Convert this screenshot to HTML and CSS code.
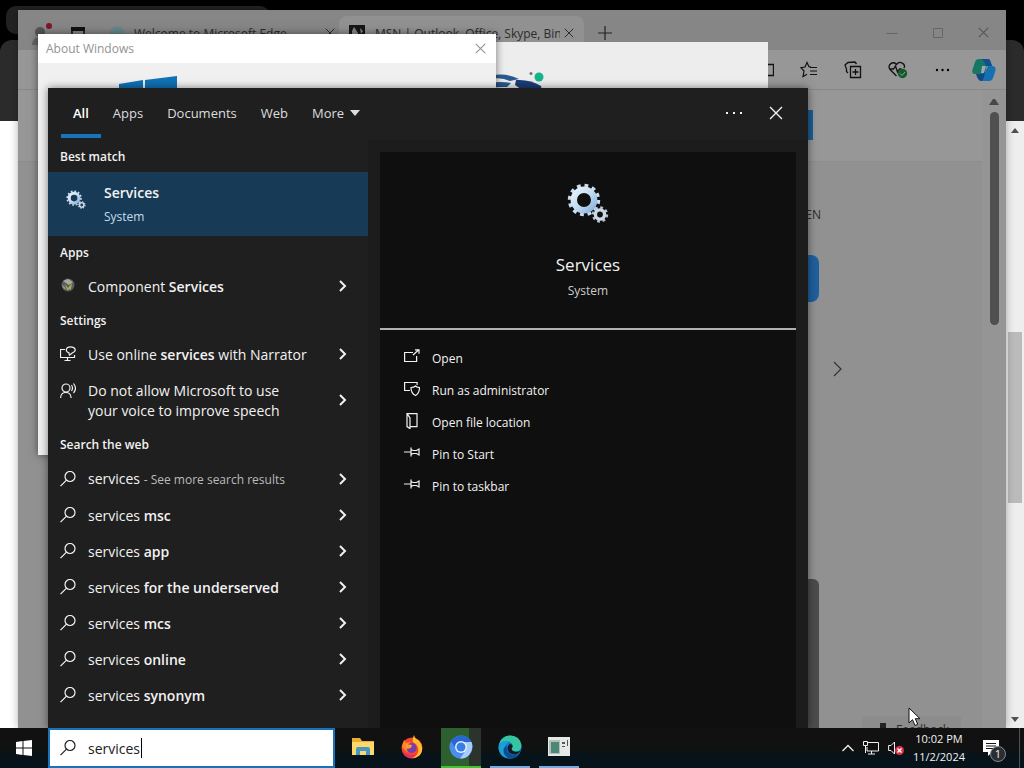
FILE: index.html
```html
<!DOCTYPE html>
<html lang="en">
<head>
    <meta charset="UTF-8">
    <meta name="viewport" content="width=device-width, initial-scale=1.0">
    <title>Desktop</title>
    <link rel="stylesheet" href="styles.css">
</head>
<body>
    <!-- shared icons -->
    <svg class="sprite" aria-hidden="true">
        <defs>
            <linearGradient id="steel" x1="0" y1="0" x2="1" y2="1">
                <stop offset="0" stop-color="#e8f0fa"/>
                <stop offset="0.5" stop-color="#c3dcf2"/>
                <stop offset="1" stop-color="#8bb2dc"/>
            </linearGradient>
        </defs>
        <symbol id="i-chevron" viewBox="0 0 10 14"><path d="M2 2l5 5-5 5" fill="none" stroke="currentColor" stroke-width="2"/></symbol>
        <symbol id="i-search" viewBox="0 0 16 16"><circle cx="10" cy="5.5" r="5" fill="none" stroke="currentColor" stroke-width="1.2"/><path d="M6.5 9.2L.5 15.2" stroke="currentColor" stroke-width="1.2"/></symbol>
        <symbol id="i-close" viewBox="0 0 14 14"><path d="M1 1l12 12M13 1L1 13" fill="none" stroke="currentColor" stroke-width="1.4"/></symbol>
        <symbol id="i-gears" viewBox="0 0 42 42">
            <circle cx="17" cy="17" r="14.5" fill="none" stroke="#c9def2" stroke-width="3.4" stroke-dasharray="3.8 3.8"/>
            <circle cx="17" cy="17" r="10.2" fill="none" stroke="url(#steel)" stroke-width="6.4"/>
            <circle cx="33" cy="31.5" r="7" fill="none" stroke="#b4c3d3" stroke-width="2.4" stroke-dasharray="2.75 2.75"/>
            <circle cx="33" cy="31.5" r="4.6" fill="none" stroke="#cbd8e6" stroke-width="3.4"/>
        </symbol>
        <symbol id="i-pin" viewBox="0 0 16 16"><path d="M0 7h7M7 2.5v9M7 4.5l2 1h3.5l2.5-1.5v6l-2.5-1.5H9l-2 1" fill="none" stroke="currentColor" stroke-width="1.2"/></symbol>
    </svg>

    <div class="desktop">
        <main class="workspace">
            <div class="page-back">
                <div class="page-tabs"></div>
                <div class="page-bar"></div>
                <div class="page-body">
                    <div class="scroll-track">
                        <svg width="8" height="5" viewBox="0 0 8 5"><path d="M0 5l4-5 4 5z" fill="#505050"/></svg>
                        <div class="scroll-thumb"></div>
                        <svg width="8" height="5" viewBox="0 0 8 5"><path d="M0 0l4 5 4-5z" fill="#505050"/></svg>
                    </div>
                </div>
            </div>

            <section class="window browser">
                <div class="browser-tabs">
                    <svg class="profile" width="24" height="24" viewBox="0 0 24 24"><circle cx="9" cy="11" r="5" fill="#555"/><path d="M1 24c0-11 16-11 16 0z" fill="#666"/><circle cx="18" cy="5" r="3" fill="#821425"/></svg>
                    <svg class="workspaces" width="14" height="14" viewBox="0 0 14 14"><path d="M1 4h12v9H1z" fill="none" stroke="#111" stroke-width="1.5"/><path d="M0 1h14v4H0z" fill="#111"/></svg>
                    <div class="browser-tab">
                        <svg class="tab-icon" width="14" height="14"><circle cx="7" cy="7" r="7" fill="#66888a"/></svg>
                        <span>Welcome to Microsoft Edge</span>
                        <svg width="10" height="10"><use href="#i-close"/></svg>
                    </div>
                    <div class="browser-tab active">
                        <svg class="tab-icon" width="16" height="16" viewBox="0 0 16 16"><path d="M0 0h16v16H0z" fill="#151515"/><path d="M5 2l4 6v8H3V6zM11 3l3 3-2 3z" fill="#888"/></svg>
                        <span>MSN | Outlook, Office, Skype, Bin</span>
                        <svg width="10" height="10"><use href="#i-close"/></svg>
                    </div>
                    <svg class="new-tab" width="14" height="14" viewBox="0 0 14 14"><path d="M7 0v14M0 7h14" stroke="#222" stroke-width="1.2"/></svg>
                    <div class="window-controls">
                        <svg width="12" height="12" viewBox="0 0 12 12"><path d="M0 6.5h12" stroke="#666"/></svg>
                        <svg width="12" height="12" viewBox="0 0 12 12"><path d="M1.5 1.5h9v9h-9z" fill="none" stroke="#666"/></svg>
                        <svg width="11" height="11"><use href="#i-close"/></svg>
                    </div>
                </div>
                <div class="browser-tools">
                    <svg width="18" height="18" viewBox="0 0 18 18"><path d="M2.5 3.5h15v11h-15zM8.5 3.5v11" fill="none" stroke="#111" stroke-width="1.3"/></svg>
                    <svg width="18" height="18" viewBox="0 0 18 18"><path d="M11 6l-2-.3L7 1.5 5 6l-4 .7L4 10l-1 5.5 4-2.3M10 6.500h7M10 10h7M10 13.500h7" fill="none" stroke="#111" stroke-width="1.2"/></svg>
                    <svg width="18" height="18" viewBox="0 0 18 18"><path d="M6.5 5.5h10v11h-10zM11.5 8v6M8.5 11h6M4 12l-1.500-1.500V8L1 4l3-2.500 7-.5 1.500 2" fill="none" stroke="#111" stroke-width="1.3"/></svg>
                    <svg width="20" height="18" viewBox="0 0 20 18"><path d="M8.5 15L2 8.5C-1 4 5-1 8.5 3.5 12-1 18 3 16 7M2 8h3.500L7.500 5l2 6 2-3h2" fill="none" stroke="#111" stroke-width="1.3"/><circle cx="14.5" cy="12.5" r="4.700" fill="#125c2b"/><path d="M12 12.500l2 2 3-3.500" fill="none" stroke="#9a9a9a"/></svg>
                    <svg width="18" height="18" viewBox="0 0 18 18"><circle cx="3" cy="9" r="1.2"/><circle cx="8.5" cy="9" r="1.2"/><circle cx="14" cy="9" r="1.2"/></svg>
                    <svg class="copilot" width="24" height="24" viewBox="0 0 24 24"><path d="M7 1h9q2 0 3 4l1 3h-5l-1 2-2 6H2q-3-1-1-6l2-6q1-3 4-3z" fill="#167765"/><path d="M9 1h7q2 0 3 4l1 3h-6q-2-6-5-7z" fill="#114f91"/><path d="M16 8h5q4 1 2 6l-2 6q-1 3-4 3H9q-2 0-4-7h6q2 0 3-4z" fill="#1471b0"/><path d="M4 16h7l3-6-2 9q-1 4-3 4-3 0-5-7z" fill="#124883"/><path d="M10 8h4l-2 7H9z" fill="#9caab0"/></svg>
                </div>
                <div class="browser-page">
                    <div class="news">
                        <div class="news-head"><div class="search-go"></div></div>
                        <div class="news-column">
                            <span class="news-link">OPEN</span>
                            <div class="news-button"></div>
                            <div class="news-card"></div>
                            <svg class="next" width="9" height="16" viewBox="0 0 9 16"><path d="M1 1l7 7-7 7" fill="none" stroke="#333" stroke-width="1.2"/></svg>
                        </div>
                        <div class="feedback">
                            <svg width="12" height="12" viewBox="0 0 12 12"><path d="M0 5h6v7H0zM6 0h6v5H6z" fill="#222"/></svg>
                            <span>Feedback</span>
                        </div>
                    </div>
                    <div class="news-scroll">
                        <svg width="10" height="6" viewBox="0 0 10 6"><path d="M0 6l4-6h2l4 6z" fill="#484848"/></svg>
                        <div class="news-thumb"></div>
                    </div>
                </div>
            </section>

            <section class="window splash">
                <svg width="60" height="20" viewBox="0 0 60 20"><path d="M0 4q14-4 28 3l-9 2q-9-4-19-2zM0 11q9-2 20 0l-4 4H0z" fill="#2a5b8f"/><path d="M25 8q14-1 25 6l1 6H34l-10-7z" fill="#1b3d79"/><path d="M0 17l16-1 10 4H0z" fill="#1b3d79"/><circle cx="48" cy="5" r="4.500" fill="#15b389"/><circle cx="40" cy="1.500" r="1.500" fill="#756b84"/></svg>
            </section>

            <section class="window about">
                <div class="about-title">
                    <span>About Windows</span>
                    <svg width="11" height="11"><use href="#i-close"/></svg>
                </div>
                <div class="about-body">
                    <svg width="60" height="52" viewBox="0 0 60 52"><path d="M1 8l24-4v22H1zM27 4l32-4v26H27zM1 28h24v20L1 45zM27 28h32v24l-32-4z" fill="#0f72b5"/></svg>
                </div>
            </section>

            <section class="search-panel">
                <header class="search-head">
                    <nav class="tabs">
                        <button class="tab selected">All</button>
                        <button class="tab">Apps</button>
                        <button class="tab">Documents</button>
                        <button class="tab">Web</button>
                        <button class="tab">More <svg width="10" height="6" viewBox="0 0 10 6"><path d="M0 0h10L5 6z" fill="currentColor"/></svg></button>
                    </nav>
                    <div class="head-actions">
                        <button class="icon-button" aria-label="Options"><svg width="16" height="4" viewBox="0 0 16 4"><path d="M0 1h2v2H0zM7 1h2v2H7zM14 1h2v2h-2z" fill="currentColor"/></svg></button>
                        <button class="icon-button" aria-label="Close"><svg width="14" height="14"><use href="#i-close"/></svg></button>
                    </div>
                </header>
                <div class="search-body">
                    <div class="results">
                        <h2>Best match</h2>
                        <button class="best-match">
                            <svg width="20" height="20"><use href="#i-gears"/></svg>
                            <span class="best-text"><strong>Services</strong><small>System</small></span>
                        </button>
                        <h2>Apps</h2>
                        <button class="result">
                            <svg width="16" height="16" viewBox="0 0 16 16"><circle cx="8" cy="7" r="6.5" fill="#59605c"/><path d="M3 3l5-2 5 3-4 3z" fill="#a5aaa2"/><path d="M5 6l3 4 4-5-1 6-4 1z" fill="#b6a94b"/><path d="M2 7l3 2 1 3-3-2z" fill="#849d91"/></svg>
                            <span>Component <b>Services</b></span>
                            <svg width="10" height="14"><use href="#i-chevron"/></svg>
                        </button>
                        <h2>Settings</h2>
                        <button class="result">
                            <svg width="16" height="16" viewBox="0 0 16 16"><path d="M5 3.500H.500v8h14V9M7.500 11.500v3M4.500 14.500h6M9 8.500V6.800C5 5.500 5.500.800 10.500.800s6.500 4.500 2 6L9 9.500" fill="none" stroke="currentColor" stroke-width="1.2"/></svg>
                            <span>Use online <b>services</b> with Narrator</span>
                            <svg width="10" height="14"><use href="#i-chevron"/></svg>
                        </button>
                        <button class="result two-lines">
                            <svg width="16" height="16" viewBox="0 0 16 16"><circle cx="6" cy="5" r="4" fill="none" stroke="currentColor" stroke-width="1.2"/><path d="M.600 15c0-7.500 10.500-7.500 10.500 0M11.500 2q2 3 0 6M13.500.500q4 5 0 9.500" fill="none" stroke="currentColor" stroke-width="1.2"/></svg>
                            <span>Do not allow Microsoft to use your voice to improve speech</span>
                            <svg width="10" height="14"><use href="#i-chevron"/></svg>
                        </button>
                        <h2>Search the web</h2>
                        <button class="result more-results"><svg width="16" height="16"><use href="#i-search"/></svg><span>services <small>- See more search results</small></span><svg width="10" height="14"><use href="#i-chevron"/></svg></button>
                        <button class="result"><svg width="16" height="16"><use href="#i-search"/></svg><span>services <b>msc</b></span><svg width="10" height="14"><use href="#i-chevron"/></svg></button>
                        <button class="result"><svg width="16" height="16"><use href="#i-search"/></svg><span>services <b>app</b></span><svg width="10" height="14"><use href="#i-chevron"/></svg></button>
                        <button class="result"><svg width="16" height="16"><use href="#i-search"/></svg><span>services <b>for the underserved</b></span><svg width="10" height="14"><use href="#i-chevron"/></svg></button>
                        <button class="result"><svg width="16" height="16"><use href="#i-search"/></svg><span>services <b>mcs</b></span><svg width="10" height="14"><use href="#i-chevron"/></svg></button>
                        <button class="result"><svg width="16" height="16"><use href="#i-search"/></svg><span>services <b>online</b></span><svg width="10" height="14"><use href="#i-chevron"/></svg></button>
                        <button class="result"><svg width="16" height="16"><use href="#i-search"/></svg><span>services <b>synonym</b></span><svg width="10" height="14"><use href="#i-chevron"/></svg></button>
                    </div>
                    <div class="preview">
                        <div class="preview-head">
                            <svg width="42" height="42"><use href="#i-gears"/></svg>
                            <h1>Services</h1>
                            <p>System</p>
                        </div>
                        <div class="actions">
                            <button class="action"><svg width="16" height="16" viewBox="0 0 16 16"><path d="M9 3.500H.600v9h12V7M9 6l5.500-5M11 .800h4v4" fill="none" stroke="currentColor" stroke-width="1.2"/></svg>Open</button>
                            <button class="action"><svg width="16" height="16" viewBox="0 0 16 16"><path d="M6 9.500H.600v-8h12.500V4M7 6.500q3 0 4.500-1.500Q13 6.500 15.500 6.500c0 4-1 6.500-4 8-3.500-1.500-4.500-4-4.500-8z" fill="none" stroke="currentColor" stroke-width="1.2"/></svg>Run as administrator</button>
                            <button class="action"><svg width="16" height="16" viewBox="0 0 16 16"><path d="M3 .600h10v13H6M3 .600v13l3 2V5z" fill="none" stroke="currentColor" stroke-width="1.2"/></svg>Open file location</button>
                            <button class="action"><svg width="16" height="16"><use href="#i-pin"/></svg>Pin to Start</button>
                            <button class="action"><svg width="16" height="16"><use href="#i-pin"/></svg>Pin to taskbar</button>
                        </div>
                    </div>
                </div>
            </section>
        </main>

        <footer class="taskbar">
            <button class="start" aria-label="Start"><svg width="16" height="16" viewBox="0 0 16 16"><path d="M0 2l6.500-1v6.500H0zM7.500.900L16 0v7.500H7.500zM0 8.500h6.500V15L0 14zM7.500 8.500H16V16l-8.500-1z" fill="#fff"/></svg></button>
            <label class="search-box">
                <svg width="16" height="16"><use href="#i-search"/></svg>
                <input type="text" value="services" aria-label="Search">
                <span class="caret"></span>
            </label>
            <div class="apps">
                <button class="app" aria-label="File Explorer"><svg width="22" height="20" viewBox="0 0 22 20"><path d="M0 1h8l2 3h12v14H0z" fill="#e9ad36"/><path d="M0 5h22v13H0z" fill="#fbd867"/><path d="M4 18v-6q0-2 2-2h10q2 0 2 2v6h-4v-4H8v4z" fill="#4496c4"/></svg></button>
                <button class="app" aria-label="Firefox"><svg width="24" height="24" viewBox="0 0 24 24"><circle cx="12" cy="13" r="10.5" fill="#f6462c"/><path d="M14 0q1 4 4 5 5 5 4 11-2 7-10 7 8-4 6-10-1-4-5-6-1-3 1-7z" fill="#ffbd2c"/><path d="M2 12L4 5l2 3 5-1-3 4 4 2-5 4z" fill="#ff8927"/><circle cx="11.5" cy="13" r="5" fill="#7340ae"/><path d="M6 9l6 1-1 3-5 1z" fill="#ff9b2e"/><path d="M2 16q7 6 15 3-4 5-9 3.500Q4 21 2 16z" fill="#e52b67"/></svg></button>
                <button class="app current" aria-label="Chromium"><svg width="24" height="24" viewBox="0 0 24 24"><circle cx="12" cy="12" r="11.5" fill="#4b8cf0"/><path d="M12 7h10.500Q25 14 20 20q-4 4-9 3.500L17 15z" fill="#a8cdfb"/><path d="M2 6q4-6 12-5.500Q20 2 22.500 7H12L7 14z" fill="#2867d0"/><circle cx="12" cy="12" r="6" fill="#e7f1ff"/><circle cx="12" cy="12" r="4.5" fill="#397de6"/></svg></button>
                <button class="app open" aria-label="Microsoft Edge"><svg width="24" height="24" viewBox="0 0 24 24"><circle cx="12" cy="12" r="11.5" fill="#1378c5"/><path d="M1 10Q3 1 12 .500q10 0 11.500 10 0 6-7 6-5-1-2-4 1-5-5-6Q3 6 1 10z" fill="#35c6a0"/><path d="M1 10q4-6 11-3-6 2-5 9 1 6 7 7Q3 25 .500 14z" fill="#1b9fd6"/><path d="M9 10q-2 9 8 10 3 0 5-2-5 7-12 5-6-4-4-10z" fill="#0c4f91"/><path d="M12 9q3 0 2.500 3-2.500 3 2 4.500 4 1 6-1-2 4-6 4-7-1-7-6 0-3 2.500-4.500z" fill="#101b24"/></svg></button>
                <button class="app open" aria-label="Installer"><svg width="22" height="20" viewBox="0 0 22 20"><path d="M0 0h22v19H0z" fill="#e6e8e6"/><path d="M1 3h11v14H1z" fill="#b3c0ba"/><path d="M3 5h8v11H3z" fill="#4b8877"/><path d="M14 5h3v2h-3zM14 9h3v1h-3zM19 3h1v6h-1z" fill="#555"/></svg></button>
            </div>
            <div class="tray">
                <svg width="12" height="8" viewBox="0 0 12 8"><path d="M.5 7L6 1.500 11.500 7" fill="none" stroke="#eee" stroke-width="1.3"/></svg>
                <svg width="16" height="14" viewBox="0 0 16 14"><path d="M5 1.500h10.500v8.500H4V6M8.500 10v3M5 13h7M.500.500h4v4h-4zM2.500 4.500V12" fill="none" stroke="#eee"/></svg>
                <svg width="16" height="14" viewBox="0 0 16 14"><path d="M.600 4.500H3L6.500 1v12L3 9.500H.600z" fill="none" stroke="#eee"/><circle cx="11.5" cy="9.5" r="4.5" fill="#d83445"/><path d="M9.500 7.500l4 4M13.500 7.500l-4 4" stroke="#fff" stroke-width="1.4"/></svg>
                <div class="clock"><span>10:02 PM</span><span>11/2/2024</span></div>
                <div class="notifications">
                    <svg width="18" height="16" viewBox="0 0 18 16"><path d="M1 0h16v12h-7l-4 4v-4H1z" fill="#fff"/><path d="M4 3.500h10M4 6h10M4 8.500h7" stroke="#151515"/></svg>
                    <span class="badge">1</span>
                </div>
            </div>
            <div class="show-desktop"></div>
        </footer>
    </div>

    <svg class="cursor" width="14" height="20" viewBox="0 0 14 20"><path d="M1 1v15l3.500-3.300L7 18.500l2.700-1.200L7.300 11.700h4.700z" fill="#fff" stroke="#111"/></svg>
</body>
</html>
```
FILE: styles.css
```css
* {
    box-sizing: border-box;
}

body {
    margin: 0;
    font-family: "Open Sans", "Noto Sans", sans-serif;
    font-size: 14px;
    color: #f2f2f2;
    background: #000;
}

button {
    padding: 0;
    border: none;
    background: none;
    color: inherit;
    font: inherit;
    text-align: left;
}

svg {
    display: block;
    flex-shrink: 0;
}

h1, h2, p {
    margin: 0;
}

.sprite {
    position: absolute;
    width: 0;
    height: 0;
}

.desktop {
    display: flex;
    flex-direction: column;
    height: 100vh;
    overflow: hidden;
}

.workspace {
    flex: 1;
    position: relative;
    overflow: hidden;
}

/* page behind the windows */
.page-back {
    display: flex;
    flex-direction: column;
    height: 100%;
}

.page-tabs {
    width: 264px;
    height: 28px;
    margin: 6px;
    background: #222;
    border-radius: 10px;
}

.page-bar {
    height: 81px;
    background: #2b2b2b;
    border-radius: 12px 12px 0 0;
}

.page-body {
    flex: 1;
    display: flex;
    justify-content: flex-end;
    background: #fff;
}

.scroll-track {
    display: flex;
    flex-direction: column;
    align-items: center;
    justify-content: space-between;
    width: 18px;
    padding: 7px 0 6px;
    background: #eee;
}

.scroll-thumb {
    width: 14px;
    height: 171px;
    margin-bottom: 15px;
    background: #bbb;
}

.window {
    position: absolute;
    overflow: hidden;
}

/* browser window */
.browser {
    top: 10px;
    left: 18px;
    right: 18px;
    bottom: 0;
    display: flex;
    flex-direction: column;
    background: #919191;
    box-shadow: 0 0 8px rgba(0, 0, 0, 0.3);
    color: #2c2c2c;
    font-size: 12px;
}

.browser-tabs {
    display: flex;
    align-items: center;
    height: 40px;
    padding: 6px 17px 0 13px;
    background: #868686;
    white-space: nowrap;
}

.workspaces {
    margin-left: 16px;
}

.browser-tab {
    display: flex;
    align-items: center;
    gap: 4px;
    width: 245px;
    height: 34px;
    padding: 0 10px;
    margin-left: 15px;
}

.browser-tab span {
    flex: 1;
    overflow: hidden;
}

.tab-icon {
    margin-right: 6px;
}

.browser-tab.active {
    margin-left: -6px;
    background: #919191;
    border-radius: 8px 8px 0 0;
}

.new-tab {
    margin-left: 14px;
}

.window-controls {
    display: flex;
    gap: 34px;
    margin-left: auto;
    color: #555;
}

.browser-tools {
    display: flex;
    align-items: center;
    justify-content: flex-end;
    gap: 26px;
    height: 40px;
    padding-right: 10px;
    background: #979797;
    border-bottom: 1px solid #888;
}

.copilot {
    margin-left: -6px;
}

.browser-page {
    flex: 1;
    display: flex;
    min-height: 0;
    overflow: hidden;
}

.news {
    flex: 1;
    position: relative;
}

.news-head {
    height: 72px;
    padding: 20px 0 0 755px;
    background: #979797;
    border-bottom: 1px solid #8c8c8c;
}

.search-go {
    width: 40px;
    height: 30px;
    background: #1a5f94;
}

.news-column {
    display: flex;
    flex-direction: column;
    align-items: flex-end;
    width: 803px;
    padding-top: 43px;
}

.news-link {
    line-height: 20px;
}

.news-button {
    width: 80px;
    height: 47px;
    margin: 30px 2px 0 0;
    border-radius: 8px;
    background: #1f5f9c;
}

.news-card {
    width: 300px;
    height: 160px;
    margin: 277px 2px 0 0;
    border-radius: 6px;
    background: #4c4c4c;
}

.next {
    position: absolute;
    top: 271px;
    left: 815px;
}

.feedback {
    position: absolute;
    left: 844px;
    bottom: -14px;
    display: flex;
    align-items: center;
    gap: 10px;
    height: 26px;
    padding: 0 12px;
    background: #8c8c8c;
}

.news-scroll {
    display: flex;
    flex-direction: column;
    align-items: center;
    gap: 7px;
    width: 24px;
    padding-top: 9px;
    background: #959595;
}

.news-thumb {
    width: 9px;
    height: 213px;
    border-radius: 5px;
    background: #505050;
}

/* splash and about */
.splash {
    top: 42px;
    left: 468px;
    width: 300px;
    height: 300px;
    padding: 30px 0 0 23px;
    background: #ededed;
}

.about {
    top: 34px;
    left: 38px;
    width: 458px;
    height: 421px;
    background: #f0f0f0;
    box-shadow: 0 0 8px rgba(0, 0, 0, 0.5);
}

.about-title {
    display: flex;
    align-items: center;
    justify-content: space-between;
    height: 29px;
    padding: 0 10px 0 8px;
    background: #fff;
    color: #929292;
    font-size: 12px;
}

.about-body {
    padding: 13px 0 0 80px;
}

/* search panel */
.search-panel {
    position: absolute;
    top: 88px;
    left: 48px;
    bottom: 0;
    display: flex;
    flex-direction: column;
    width: 760px;
    background: #1c1c1c;
    box-shadow: 0 0 8px rgba(0, 0, 0, 0.5);
}

.search-head {
    display: flex;
    justify-content: space-between;
    height: 52px;
    background: #1f1f1f;
}

.tabs {
    display: flex;
    height: 50px;
    padding-left: 13px;
}

.tab {
    display: flex;
    align-items: center;
    gap: 6px;
    padding: 4px 12px 0;
    border-bottom: 4px solid transparent;
    font-size: 13px;
    color: #ddd;
}

.tab.selected {
    border-color: #1873bd;
    color: #fff;
    font-weight: 600;
}

.head-actions {
    display: flex;
    align-items: center;
    height: 50px;
    padding-right: 11px;
}

.icon-button {
    display: flex;
    align-items: center;
    justify-content: center;
    width: 42px;
    height: 40px;
}

.search-body {
    flex: 1;
    display: flex;
    gap: 12px;
    min-height: 0;
    padding-right: 12px;
}

.results {
    width: 320px;
    background: #1f1f1f;
}

.results h2 {
    padding: 2px 0 0 12px;
    font-size: 12px;
    font-weight: 600;
    line-height: 30px;
}

.best-match {
    display: flex;
    align-items: center;
    gap: 18px;
    width: 100%;
    height: 64px;
    padding: 2px 18px 0;
    background: #173a56;
}

.best-match > svg {
    margin-bottom: 10px;
}

.best-text {
    display: flex;
    flex-direction: column;
    line-height: 24px;
}

.best-text strong {
    font-weight: 600;
}

.best-text small {
    font-size: 12px;
    color: #c5dcec;
}

.result {
    display: flex;
    align-items: center;
    gap: 12px;
    width: 100%;
    height: 36px;
    padding: 0 20px 0 12px;
    line-height: 20px;
}

.result span {
    flex: 1;
    padding-top: 2px;
}

.result b {
    font-weight: 600;
}

.result small {
    font-size: 12px;
    color: #bbb;
}

.more-results {
    height: 37px;
}

.two-lines {
    height: 56px;
}

.two-lines > svg:first-child {
    align-self: flex-start;
    margin-top: 11px;
}

.two-lines span {
    padding-right: 30px;
}

.preview {
    flex: 1;
    margin-top: 12px;
    background: #0f0f0f;
}

.preview-head {
    display: flex;
    flex-direction: column;
    align-items: center;
    height: 178px;
    padding-top: 31px;
    border-bottom: 2px solid #b0b0b0;
}

.preview-head h1 {
    margin-top: 26px;
    font-size: 17px;
    font-weight: 400;
    line-height: 28px;
}

.preview-head p {
    font-size: 12px;
    line-height: 24px;
    color: #ccc;
}

.actions {
    padding: 12px 24px;
}

.action {
    display: flex;
    align-items: center;
    gap: 12px;
    width: 100%;
    height: 32px;
    font-size: 12px;
}

.action svg {
    margin-bottom: 2px;
}

/* taskbar */
.taskbar {
    display: flex;
    align-items: center;
    height: 40px;
    background: linear-gradient(#111 50%, #07131b 70%);
}

.start {
    display: flex;
    align-items: center;
    justify-content: center;
    width: 48px;
    height: 40px;
}

.search-box {
    position: relative;
    display: flex;
    align-items: center;
    gap: 12px;
    width: 287px;
    height: 40px;
    padding: 0 10px;
    border: 2px solid #1873bd;
    background: #fff;
    color: #222;
}

.search-box input {
    flex: 1;
    min-width: 0;
    padding: 0;
    border: none;
    outline: none;
    background: none;
    font: inherit;
    color: #222;
}

.caret {
    position: absolute;
    left: 91px;
    top: 8px;
    width: 1px;
    height: 20px;
    background: #000;
}

.apps {
    display: flex;
    gap: 9px;
    margin-left: 8px;
}

.app {
    display: flex;
    align-items: center;
    justify-content: center;
    width: 40px;
    height: 40px;
    border-bottom: 2px solid transparent;
}

.app.open {
    border-color: #76a9df;
}

.app.current {
    background: linear-gradient(90deg, #2e5f2e 70%, #2c332d 70%);
    border-color: #3fc42e;
}

.tray {
    display: flex;
    align-items: center;
    gap: 9px;
    margin-left: auto;
    padding-right: 19px;
}

.clock {
    display: flex;
    flex-direction: column;
    align-items: center;
    font-size: 11px;
    line-height: 18px;
}

.notifications {
    position: relative;
    margin-left: 8px;
}

.badge {
    position: absolute;
    left: 8px;
    top: 6px;
    width: 16px;
    height: 16px;
    border: 1px solid #888;
    border-radius: 50%;
    background: #2a2e32;
    font-size: 11px;
    line-height: 14px;
    text-align: center;
}

.show-desktop {
    width: 5px;
    height: 40px;
    border-left: 1px solid #4a5258;
}

.cursor {
    position: absolute;
    left: 908px;
    top: 707px;
}
```
